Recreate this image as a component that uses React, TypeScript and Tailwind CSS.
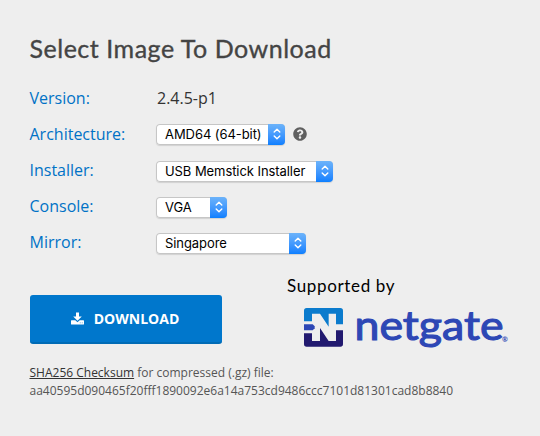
import { clsx } from 'clsx'
import { FaQuestionCircle } from 'react-icons/fa'

interface SelectProps {
  value: string
  className: string
}

function Select({ value, className }: SelectProps) {
  return (
    <button
      className={clsx(
        "flex h-[21px] shrink-0 items-stretch justify-between overflow-hidden rounded-[4px] bg-white font-['Inter',sans-serif] text-[13px] tracking-[-0.07px] text-black shadow-[inset_0_0_0_1px_#c6c6c6,0_1px_1px_rgba(0,0,0,0.12)]",
        className,
      )}
    >
      <span className="pl-[9px] leading-[21px] whitespace-nowrap">{value}</span>
      <span className="flex w-[17px] items-center justify-center bg-linear-to-b from-[#6cb3fa] to-[#0a7fff]">
        <svg width="8" height="12" viewBox="0 0 8 12" fill="none" stroke="white" strokeWidth="1.4" strokeLinecap="round" strokeLinejoin="round">
          <polyline points="1.2 4 4 1.2 6.8 4" />
          <polyline points="1.2 8 4 10.8 6.8 8" />
        </svg>
      </span>
    </button>
  )
}

function DownloadIcon() {
  return (
    <svg width="13" height="13" viewBox="0 0 13 13" fill="white">
      <path d="M5 0.5H8V4.5H10.8L6.5 8.8L2.2 4.5H5Z" />
      <path fillRule="evenodd" d="M0.6 8.2H4.3L6.5 10.2L8.7 8.2H12.4Q13 8.2 13 8.8V11.9Q13 12.5 12.4 12.5H0.6Q0 12.5 0 11.9V8.8Q0 8.2 0.6 8.2ZM8.8 10.5V11.3H9.6V10.5ZM10.8 10.5V11.3H11.6V10.5Z" />
    </svg>
  )
}

function NetgateLogo() {
  return (
    <svg width="212" height="62" viewBox="0 -8 212 62" role="img" aria-label="netgate">
      <g transform="translate(0 4) scale(0.3333) translate(-12 -12)">
        <path fill="#0b7bcd" d="M12 52V20q0-8 8-8H121q8 0 8 8V61H108V29H86V68L60 29H36V52Z" />
        <path fill="#2d47b5" d="M12 61H38L44 67V73L38 79H12Z" />
        <path fill="#21196f" d="M12 88V120q0 8 8 8H121q8 0 8-8V79H108V111H86L60 72V111H36V88Z" />
      </g>
      <text x="50.5" y="35.5" textLength="149" lengthAdjust="spacingAndGlyphs" fill="#2d47b5" stroke="#2d47b5" strokeWidth="1.1" className="font-['Lato',sans-serif] text-[41px]">netgate</text>
      <text x="198" y="37.5" fill="#2d47b5" className="font-['Lato',sans-serif] text-[7px] font-bold">®</text>
    </svg>
  )
}

function Label({ children }: { children: string }) {
  return <span className="w-[126.5px] shrink-0 text-[#0072c6]">{children}</span>
}

export default function App() {
  return (
    <div className="h-[436px] w-[540px] overflow-hidden bg-[#eeeeee] pt-[32px] pl-[29.5px] font-['Open_Sans',sans-serif] text-[#333]">
      <h1 className="h-[48px] font-['Lato',sans-serif] text-[25px] leading-[33px] tracking-[0.52px] whitespace-nowrap text-[#444] [-webkit-text-stroke:0.35px_#444]">
        Select Image To Download
      </h1>

      <div className="text-[16px] leading-9">
        <div className="flex h-9 items-center">
          <Label>Version:</Label>
          <span className="pl-px">2.4.5-p1</span>
        </div>
        <div className="flex h-9 items-center">
          <Label>Architecture:</Label>
          <Select value="AMD64 (64-bit)" className="w-[129px]" />
          <FaQuestionCircle className="ml-2 size-[14px] text-[#606060]" />
        </div>
        <div className="flex h-9 items-center">
          <Label>Installer:</Label>
          <Select value="USB Memstick Installer" className="mt-[2px] w-[177px]" />
        </div>
        <div className="flex h-9 items-center">
          <Label>Console:</Label>
          <Select value="VGA" className="mt-[2px] w-[71px]" />
        </div>
        <div className="flex h-9 items-center">
          <Label>Mirror:</Label>
          <Select value="Singapore" className="mt-[2px] w-[150px]" />
        </div>
      </div>

      <div className="mt-[16px] flex pl-[0.5px]">
        <button className="mt-[19px] flex h-[49px] w-[192px] items-center justify-center gap-[10px] rounded-[3px] border-b-2 border-[#006bb5] bg-[#0077cc] pr-[2px] text-[14px] font-bold text-white">
          <DownloadIcon />
          DOWNLOAD
        </button>
        <div className="ml-[65px]">
          <div className="h-[20px] font-['Lato',sans-serif] text-[17px] leading-[20px] tracking-[0.65px] whitespace-nowrap text-black">Supported by</div>
          <div className="-mb-1 ml-[17px]">
            <NetgateLogo />
          </div>
        </div>
      </div>

      <div className="mt-[10px] text-[12px] leading-[18px] whitespace-nowrap text-[#555]">
        <p>
          <a className="text-[#333] underline">SHA256 Checksum</a> for compressed (.gz) file:
        </p>
        <p>aa40595d090465f20fff1890092e6a14a753cd9486ccc7101d81301cad8b8840</p>
      </div>
    </div>
  )
}
